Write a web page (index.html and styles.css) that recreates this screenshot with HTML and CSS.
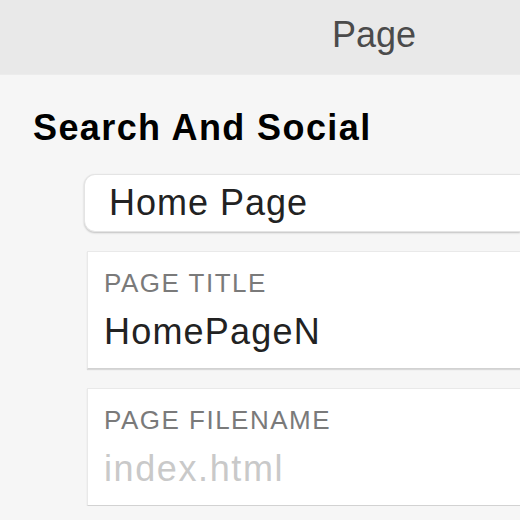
FILE: index.html
```html
<!DOCTYPE html>
<html>
<head>
<meta charset="utf-8">
<link rel="stylesheet" href="styles.css">
</head>
<body>
<div class="app">
  <header class="topbar"><span class="topbar-title">Page</span></header>
  <main class="panel">
    <h2 class="section-title">Search And Social</h2>
    <div class="fields">
      <input class="name-input" type="text" value="Home Page">
      <div class="card">
        <div class="card-label">PAGE TITLE</div>
        <div class="card-value">HomePageN</div>
      </div>
      <div class="card">
        <div class="card-label">PAGE FILENAME</div>
        <div class="card-value placeholder">index.html</div>
      </div>
    </div>
  </main>
</div>
</body>
</html>
```
FILE: styles.css
```css
html, body {
  margin: 0;
  padding: 0;
  overflow: hidden;
  background: #f6f6f6;
}
body {
  font-family: "Liberation Sans", Arial, sans-serif;
}
.app {
  width: 100%;
}
.topbar {
  box-sizing: border-box;
  height: 75px;
  background: #e9e9e9;
  display: flex;
  align-items: flex-start;
  padding: 13px 0 0 332px;
  border-bottom: 1px solid #ececec;
}
.topbar-title {
  font-size: 36px;
  line-height: 1.2;
  color: #4b4b4b;
}
.panel {
  padding: 31px 0 0 33px;
}
.section-title {
  margin: 0;
  font-size: 36px;
  line-height: 1.2;
  font-weight: bold;
  letter-spacing: 1.4px;
  color: #000;
}
.fields {
  display: flex;
  flex-direction: column;
  gap: 19px;
  padding-top: 25px;
}
.name-input {
  box-sizing: border-box;
  margin: 0 0 0 51px;
  height: 58px;
  width: auto;
  min-width: 0;
  padding: 0 0 0 24px;
  border: 1px solid #e4e4e4;
  border-right: none;
  border-radius: 11px 0 0 11px;
  background: #fff;
  box-shadow: 0 1px 2px rgba(0, 0, 0, 0.22);
  font-family: "Liberation Sans", Arial, sans-serif;
  font-size: 36px;
  letter-spacing: 1px;
  color: #222;
  outline: none;
}
.card {
  box-sizing: border-box;
  margin-left: 54px;
  height: 118px;
  padding: 16px 0 0 16px;
  background: #fff;
  border: 1px solid #e9e9e9;
  border-right: none;
  border-bottom: 1px solid #d2d2d2;
  box-shadow: 0 1px 1px rgba(0, 0, 0, 0.12);
  display: flex;
  flex-direction: column;
  gap: 11px;
}
.card-label {
  font-size: 26px;
  line-height: 1.2;
  letter-spacing: 1.5px;
  color: #7a7a7a;
}
.card-value {
  font-size: 36px;
  line-height: 1.2;
  letter-spacing: 1.2px;
  color: #222;
}
.card-value.placeholder {
  color: #c9c9c9;
  letter-spacing: 1.6px;
}
```
